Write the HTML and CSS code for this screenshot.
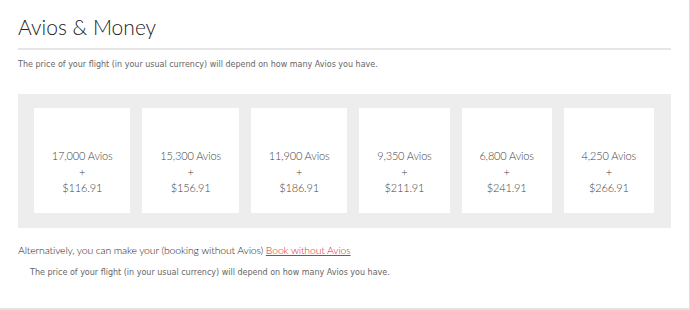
FILE: index.html
```html
<!DOCTYPE html>
<html>
<head>
<meta charset="utf-8">
<link rel="stylesheet" href="styles.css">
</head>
<body>
<div class="page">
  <h1 class="title">Avios &amp; Money</h1>
  <p class="note">The price of your flight (in your usual currency) will depend on how many Avios you have.</p>
  <div class="options">
    <div class="card"><span>17,000 Avios</span><span>+</span><span>$116.91</span></div>
    <div class="card"><span>15,300 Avios</span><span>+</span><span>$156.91</span></div>
    <div class="card"><span>11,900 Avios</span><span>+</span><span>$186.91</span></div>
    <div class="card"><span>9,350 Avios</span><span>+</span><span>$211.91</span></div>
    <div class="card"><span>6,800 Avios</span><span>+</span><span>$241.91</span></div>
    <div class="card"><span>4,250 Avios</span><span>+</span><span>$266.91</span></div>
  </div>
  <p class="alt">Alternatively, you can make your (booking without Avios) <a href="#" class="link">Book without Avios</a></p>
  <p class="note indent">The price of your flight (in your usual currency) will depend on how many Avios you have.</p>
</div>
</body>
</html>
```

FILE: styles.css
```css
html, body {
  margin: 0;
  padding: 0;
  background: #fff;
}
.page {
  width: 690px;
  height: 310px;
  box-sizing: border-box;
  border-right: 1px solid #dedede;
  border-bottom: 2px solid #e2e2e2;
  padding: 12px 18px 0 18px;
}
.title {
  margin: 0;
  font-family: Lato, sans-serif;
  font-weight: 300;
  font-size: 21px;
  line-height: 30px;
  color: #222;
  padding-bottom: 6px;
  border-bottom: 2px solid #e6e6e6;
  width: 653px;
}
.note {
  margin: 9px 0 0 0;
  font-family: "DejaVu Sans", Verdana, sans-serif;
  font-size: 8px;
  line-height: 12px;
  color: #666;
}
.options {
  margin-top: 23px;
  width: 653px;
  box-sizing: border-box;
  background: #ededed;
  padding: 14px 17px 15px 16px;
  display: flex;
  gap: 12px;
}
.card {
  flex: 1 1 auto;
  background: #fff;
  height: 105px;
  box-sizing: border-box;
  padding-top: 40px;
  display: flex;
  flex-direction: column;
  align-items: center;
  font-family: Lato, sans-serif;
  font-weight: 300;
  font-size: 11px;
  letter-spacing: -0.15px;
  line-height: 16px;
  color: #444;
}
.alt {
  margin: 14px 0 0 0;
  font-family: Lato, sans-serif;
  font-weight: 300;
  font-size: 10.5px;
  letter-spacing: -0.17px;
  line-height: 16px;
  color: #222;
}
.link {
  color: #e0283a;
  text-decoration: underline;
}
.indent {
  margin-top: 9px;
  padding-left: 12px;
}
```
